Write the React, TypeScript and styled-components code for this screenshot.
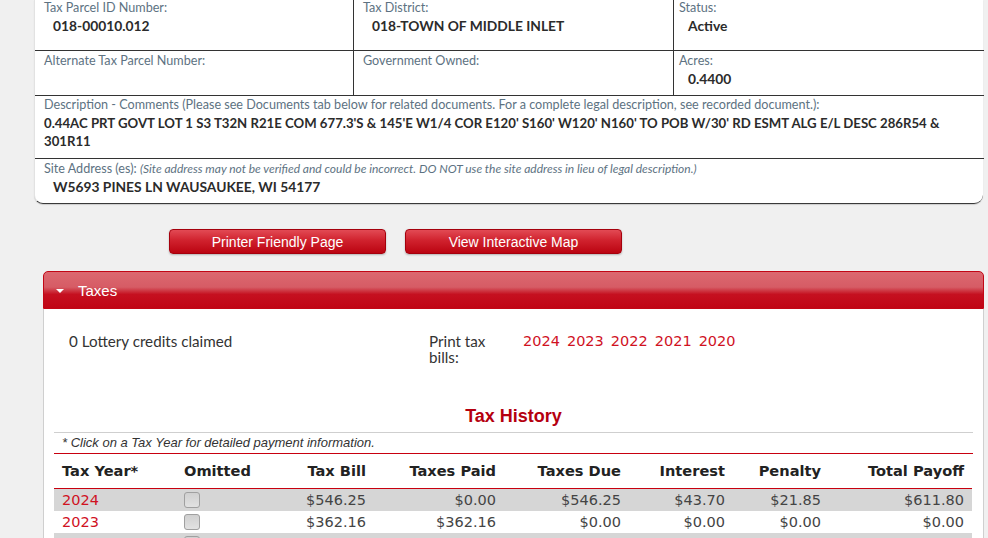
import styled, { createGlobalStyle } from 'styled-components';

const GlobalStyle = createGlobalStyle`
	html, body {
		margin: 0;
		padding: 0;
		background: #f0f0f0;
	}
	body {
		font-family: Lato, "Liberation Sans", sans-serif;
		color: #333;
	}
`;

const Page = styled.div`
	display: flex;
	flex-direction: column;
	width: 988px;
	height: 538px;
	overflow: hidden;

	& > * {
		flex-shrink: 0;
	}
`;

const ParcelCard = styled.section`
	display: grid;
	grid-template-columns: 319px 320px 310px;
	grid-template-rows: 51px 45px 63px 44px;
	width: 949px;
	margin-left: 34px;
	background: #fff;
	border-bottom: 1px solid #3a3a3a;
	border-left: 1px solid #e2e2e2;
	border-radius: 0 0 9px 9px;
	box-sizing: border-box;
	box-shadow: 0 1px 1px rgba(0, 0, 0, 0.15);
`;

const Cell = styled.div<{ $span?: number; $last?: boolean; $top?: number; $left?: number; $right?: number }>`
	grid-column: span ${(p) => p.$span ?? 1};
	padding: ${(p) => p.$top ?? 2}px ${(p) => p.$right ?? 10}px 0 ${(p) => p.$left ?? 9}px;
	border-right: ${(p) => (p.$last ? 'none' : '1px solid #333')};
	border-bottom: 1px solid #333;
	box-sizing: border-box;
	min-width: 0;

	&:last-child {
		border-bottom: none;
	}
`;

const Label = styled.div`
	font-size: 12.6px;
	line-height: 16px;
	color: #5d7282;
	white-space: nowrap;
`;

const Note = styled.em`
	font-size: 12px;
	color: #5d7282;
`;

const Value = styled.div<{ $indent?: boolean; $small?: boolean }>`
	margin-top: 1px;
	padding-left: ${(p) => (p.$indent ? '9px' : '0')};
	font-size: ${(p) => (p.$small ? '13.2px' : '13.8px')};
	line-height: 18px;
	font-weight: 700;
	color: #2b2b2b;
`;

const ButtonRow = styled.div`
	display: flex;
	gap: 19px;
	height: 67px;
	padding: 25px 0 0 169px;
	box-sizing: border-box;
`;

const RedButton = styled.button`
	width: 217px;
	height: 25px;
	padding: 0;
	border: 1px solid #a5000c;
	border-radius: 4px;
	background: linear-gradient(to bottom, #e24a54 0%, #d0222e 45%, #bb0411 100%);
	box-shadow: 0 1px 2px rgba(0, 0, 0, 0.25);
	color: #fff;
	font-family: "Liberation Sans", Arial, sans-serif;
	font-size: 14px;
	cursor: pointer;
`;

const TaxPanel = styled.section`
	display: flex;
	flex-direction: column;
	width: 941px;
	margin-left: 43px;
	flex: 1 0 auto;
`;

const PanelHeader = styled.header`
	display: flex;
	align-items: center;
	gap: 14px;
	height: 38px;
	padding-left: 12px;
	border: 1px solid #c20716;
	border-radius: 5px 5px 0 0;
	background: linear-gradient(
		to bottom,
		#dc6870 0%,
		#d65c65 42%,
		#c51020 62%,
		#c00515 100%
	);
	color: #fff;
	font-family: "Liberation Sans", Arial, sans-serif;
	font-size: 15px;
	box-sizing: border-box;
`;

const Caret = styled.span`
	width: 0;
	height: 0;
	margin-top: 2px;
	border-left: 4px solid transparent;
	border-right: 4px solid transparent;
	border-top: 4px solid #fff;
`;

const PanelBody = styled.div`
	flex: 1;
	padding: 0 10px;
	background: #fff;
	border-left: 1px solid #cfcfcf;
	border-right: 1px solid #cfcfcf;
`;

const CreditsRow = styled.div`
	display: flex;
	align-items: flex-start;
	padding: 24px 0 0 15px;
	font-size: 15.2px;
	line-height: 16px;
	color: #333;
`;

const Credits = styled.div`
	width: 360px;
`;

const BillsLabel = styled.div`
	width: 94px;

	span {
		display: block;
		width: 70px;
	}
`;

const YearLinks = styled.div`
	display: flex;
	gap: 7px;
`;

const YearLink = styled.a`
	color: #d0121f;
	font-family: "DejaVu Sans", Verdana, sans-serif;
	font-size: 14.5px;
	text-decoration: none;
	cursor: pointer;
`;

const HistoryTitle = styled.h3`
	margin: 40px 0 5px;
	text-align: center;
	font-family: "Liberation Sans", Arial, sans-serif;
	font-size: 18px;
	line-height: 22px;
	font-weight: 700;
	color: #b5000f;
`;

const TableNote = styled.div`
	height: 22px;
	padding-left: 8px;
	border-top: 1px solid #cfcfcf;
	border-bottom: 1px solid #c8000f;
	box-sizing: border-box;
	font-family: "Liberation Sans", Arial, sans-serif;
	font-size: 13px;
	font-style: italic;
	line-height: 20px;
	color: #333;
`;

const HistoryTable = styled.table`
	width: 918px;
	border-collapse: collapse;
	table-layout: fixed;
	font-family: "DejaVu Sans", Verdana, sans-serif;
	font-size: 14.5px;
`;

const HeadRow = styled.tr`
	height: 34px;
	border-bottom: 1px solid #c8000f;
`;

const Th = styled.th<{ $left?: boolean }>`
	padding: 0 8px 1px;
	text-align: ${(p) => (p.$left ? 'left' : 'right')};
	font-size: 14.6px;
	font-weight: 700;
	color: #222;
	white-space: nowrap;
`;

const Row = styled.tr<{ $shaded?: boolean }>`
	height: 22px;
	background: ${(p) => (p.$shaded ? '#d6d6d6' : '#fff')};
`;

const Td = styled.td<{ $left?: boolean }>`
	padding: 0 8px;
	text-align: ${(p) => (p.$left ? 'left' : 'right')};
	color: #444;
	line-height: 22px;
	white-space: nowrap;
`;

const YearCell = styled.a`
	color: #d0121f;
	text-decoration: none;
`;

const Check = styled.span`
	display: inline-block;
	width: 14px;
	height: 14px;
	margin-top: 3px;
	vertical-align: top;
	border: 1px solid #a0a0a0;
	border-radius: 3px;
	background: linear-gradient(to bottom, #d0d0d0, #e2e2e2);
`;

const columns = [122, 88, 110, 130, 125, 104, 96, 143];

// the third row is only a sliver at the bottom edge of the screenshot
const history = [
	['2024', '$546.25', '$0.00', '$546.25', '$43.70', '$21.85', '$611.80'],
	['2023', '$362.16', '$362.16', '$0.00', '$0.00', '$0.00', '$0.00'],
	['', '', '', '', '', '', ''],
];

export default function App() {
	return (
		<Page>
			<GlobalStyle />
			<ParcelCard>
				<Cell $top={0}>
					<Label>Tax Parcel ID Number:</Label>
					<Value $indent>018-00010.012</Value>
				</Cell>
				<Cell $top={0}>
					<Label>Tax District:</Label>
					<Value $indent>018-TOWN OF MIDDLE INLET</Value>
				</Cell>
				<Cell $top={0} $last $left={5}>
					<Label>Status:</Label>
					<Value $indent>Active</Value>
				</Cell>
				<Cell>
					<Label>Alternate Tax Parcel Number:</Label>
				</Cell>
				<Cell>
					<Label>Government Owned:</Label>
				</Cell>
				<Cell $last $left={5}>
					<Label>Acres:</Label>
					<Value $indent>0.4400</Value>
				</Cell>
				<Cell $span={3} $last $top={1} $right={4}>
					<Label>
						Description - Comments (Please see Documents tab below for related
						documents. For a complete legal description, see recorded
						document.):
					</Label>
					<Value $small>
						0.44AC PRT GOVT LOT 1 S3 T32N R21E COM 677.3'S &amp; 145'E W1/4 COR
						E120' S160' W120' N160' TO POB W/30' RD ESMT ALG E/L DESC 286R54
						&amp; 301R11
					</Value>
				</Cell>
				<Cell $span={3} $last>
					<Label>
						Site Address (es):{' '}
						<Note>
							(Site address may not be verified and could be incorrect. DO NOT
							use the site address in lieu of legal description.)
						</Note>
					</Label>
					<Value $indent>W5693 PINES LN WAUSAUKEE, WI 54177</Value>
				</Cell>
			</ParcelCard>

			<ButtonRow>
				<RedButton type="button">Printer Friendly Page</RedButton>
				<RedButton type="button">View Interactive Map</RedButton>
			</ButtonRow>

			<TaxPanel>
				<PanelHeader>
					<Caret />
					Taxes
				</PanelHeader>
				<PanelBody>
					<CreditsRow>
						<Credits>0 Lottery credits claimed</Credits>
						<BillsLabel>
							<span>Print tax bills:</span>
						</BillsLabel>
						<YearLinks>
							{['2024', '2023', '2022', '2021', '2020'].map((y) => (
								<YearLink key={y}>{y}</YearLink>
							))}
						</YearLinks>
					</CreditsRow>

					<HistoryTitle>Tax History</HistoryTitle>
					<TableNote>* Click on a Tax Year for detailed payment information.</TableNote>
					<HistoryTable>
						<colgroup>
							{columns.map((w, i) => (
								<col key={i} style={{ width: w }} />
							))}
						</colgroup>
						<thead>
							<HeadRow>
								<Th $left>Tax Year*</Th>
								<Th $left>Omitted</Th>
								<Th>Tax Bill</Th>
								<Th>Taxes Paid</Th>
								<Th>Taxes Due</Th>
								<Th>Interest</Th>
								<Th>Penalty</Th>
								<Th>Total Payoff</Th>
							</HeadRow>
						</thead>
						<tbody>
							{history.map(([year, ...amounts], i) => (
								<Row key={i} $shaded={i % 2 === 0}>
									<Td $left>
										<YearCell>{year}</YearCell>
									</Td>
									<Td $left>
										<Check />
									</Td>
									{amounts.map((a, j) => (
										<Td key={j}>{a}</Td>
									))}
								</Row>
							))}
						</tbody>
					</HistoryTable>
				</PanelBody>
			</TaxPanel>
		</Page>
	);
}
